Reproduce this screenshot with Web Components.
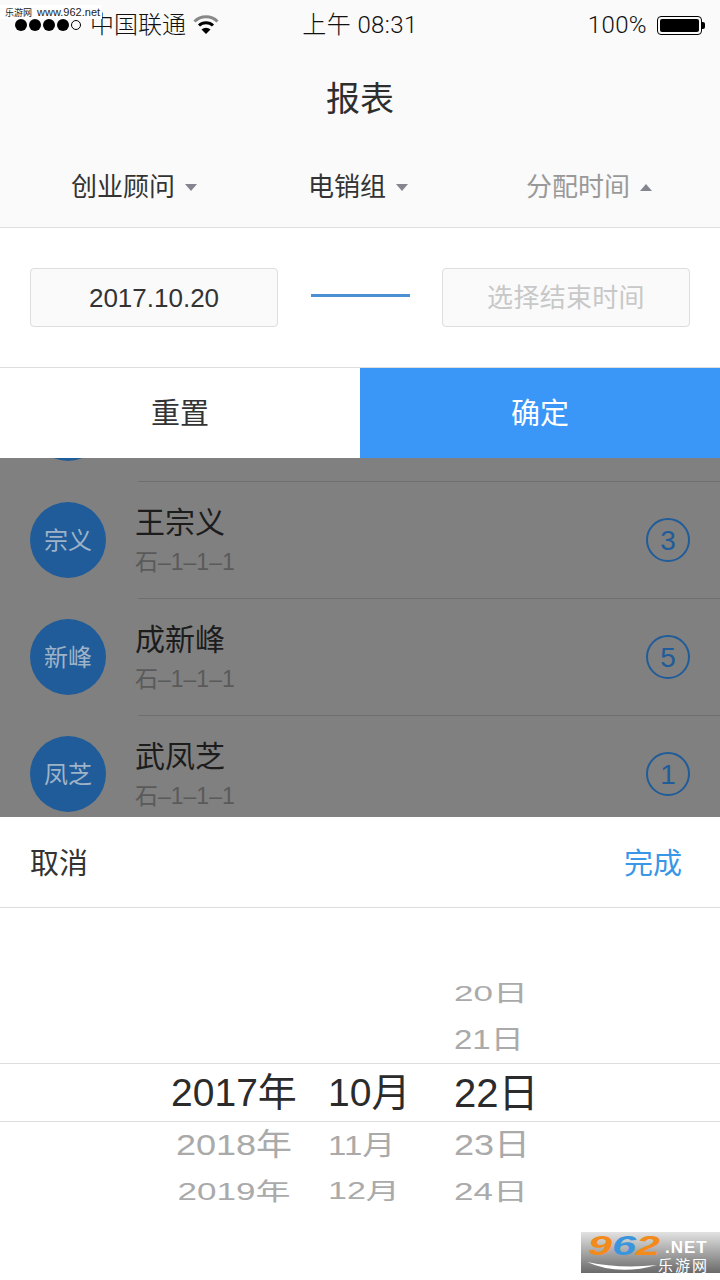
<!DOCTYPE html>
<html lang="zh-CN">
<head>
<meta charset="utf-8">
<title>报表</title>
<style>
  html,body{ margin:0; padding:0; background:#fff; }
  body{
    width:720px; height:1280px; overflow:hidden; position:relative;
    font-family:"Liberation Sans","Noto Sans CJK SC",sans-serif;
    color:#333;
  }
  .dim-list{ display:block; height:359px; overflow:hidden; background:#808080; }
</style>
</head>
<body>
<status-bar></status-bar>
<report-header></report-header>
<date-range start="2017.10.20" placeholder="选择结束时间"></date-range>
<action-bar></action-bar>
<div class="dim-list">
  <person-row partial></person-row>
  <person-row initials="宗义" name="王宗义" sub="石–1–1–1" count="3"></person-row>
  <person-row initials="新峰" name="成新峰" sub="石–1–1–1" count="5"></person-row>
  <person-row initials="凤芝" name="武凤芝" sub="石–1–1–1" count="1"></person-row>
</div>
<date-wheel></date-wheel>
<site-marks></site-marks>

<script>
(() => {
  class StatusBar extends HTMLElement {
    constructor() {
      super();
      this.attachShadow({ mode: 'open' }).innerHTML = `
        <style>
          :host{
            display:grid; grid-template-columns:1fr auto 1fr; align-items:center;
            height:50px; padding:0 15px; box-sizing:border-box;
            background:#fafafa; color:#111; font-size:24px; line-height:1;
            font-family:Roboto,"Noto Sans CJK SC",sans-serif; font-weight:300;
          }
          .left,.right{ display:flex; align-items:center; }
          .right{ justify-content:flex-end; }
          .mid,.pct{ letter-spacing:.4px; }
          .dots{ display:flex; gap:2px; margin-right:9px; align-items:center; }
          .dots i{ width:12px; height:12px; border-radius:50%; background:#000; box-sizing:border-box; }
          .dots i.off{ width:10px; height:10px; background:none; border:1px solid #000; }
          .wifi{ margin-left:7px; }
          .bat{ display:flex; align-items:center; margin-left:10px; }
          .bat b{ display:block; width:45px; height:19px; box-sizing:border-box; border:1px solid #000; border-radius:4px; padding:2px; }
          .bat b::before{ content:''; display:block; height:100%; background:#000; border-radius:2px; }
          .bat u{ display:block; width:3px; height:7px; background:#000; border-radius:0 2px 2px 0; }
        </style>
        <div class="left">
          <div class="dots"><i></i><i></i><i></i><i></i><i class="off"></i></div>
          <span>中国联通</span>
          <svg class="wifi" width="26" height="20" viewBox="0 0 26 20">
            <path d="M1.5 6.5A16.5 16.5 0 0 1 24.5 6.5" fill="none" stroke="#888" stroke-width="3"/>
            <path d="M6 10.5A10 10 0 0 1 20 10.5" fill="none" stroke="#000" stroke-width="3"/>
            <path d="M8.5 14.5A6.5 6.5 0 0 1 17.5 14.5L13 19Z" fill="#000"/>
          </svg>
        </div>
        <div class="mid">上午 08:31</div>
        <div class="right">
          <span class="pct">100%</span>
          <div class="bat"><b></b><u></u></div>
        </div>`;
    }
  }

  class ReportHeader extends HTMLElement {
    constructor() {
      super();
      this.attachShadow({ mode: 'open' }).innerHTML = `
        <style>
          :host{ display:block; background:#fafafa; border-bottom:1px solid #ddd; height:178px; box-sizing:border-box; }
          h1{ margin:0; height:97px; display:flex; align-items:center; justify-content:center; font-size:34px; font-weight:400; color:#2e2e2e; line-height:1; }
          .tabs{ display:flex; padding-left:71px; height:80px; box-sizing:border-box; align-items:center; }
          .tab{ display:flex; align-items:center; gap:10px; font-size:26px; line-height:1; color:#333; white-space:nowrap; }
          .tab + .tab{ margin-left:111px; }
          .tab + .tab + .tab{ margin-left:118px; color:#999; }
          .tri{ width:0; height:0; border:6px solid transparent; border-top:7px solid #85858f; border-bottom:0; }
          .tri.up{ border-top:0; border-bottom:7px solid #85858f; }
        </style>
        <h1>报表</h1>
        <div class="tabs">
          <div class="tab">创业顾问<span class="tri"></span></div>
          <div class="tab">电销组<span class="tri"></span></div>
          <div class="tab">分配时间<span class="tri up"></span></div>
        </div>`;
    }
  }

  class DateRange extends HTMLElement {
    constructor() {
      super();
      this.attachShadow({ mode: 'open' });
    }
    connectedCallback() {
      this.shadowRoot.innerHTML = `
        <style>
          :host{ display:flex; align-items:center; justify-content:space-between; height:139px; padding:0 30px; box-sizing:border-box; background:#fff; }
          .box{ width:248px; height:59px; box-sizing:border-box; border:1px solid #ddd; border-radius:4px; background:#fafafa; display:flex; align-items:center; justify-content:center; font-size:26px; line-height:1; color:#333; }
          .box.ph{ color:#c8c8c8; letter-spacing:.3px; padding-top:1px; }
          .dash{ width:99px; height:3px; background:#4a90d2; margin-top:-4px; }
        </style>
        <div class="box">${this.getAttribute('start')}</div>
        <div class="dash"></div>
        <div class="box ph">${this.getAttribute('placeholder')}</div>`;
    }
  }

  class ActionBar extends HTMLElement {
    constructor() {
      super();
      this.attachShadow({ mode: 'open' }).innerHTML = `
        <style>
          :host{ display:grid; grid-template-columns:1fr 1fr; height:91px; box-sizing:border-box; border-top:1px solid #ddd; font-size:29px; line-height:1; }
          div{ display:flex; align-items:center; justify-content:center; padding-top:2px; }
          .reset{ background:#fff; color:#333; }
          .ok{ background:#3a96f7; color:#fff; }
        </style>
        <div class="reset">重置</div>
        <div class="ok">确定</div>`;
    }
  }

  class PersonRow extends HTMLElement {
    constructor() {
      super();
      this.attachShadow({ mode: 'open' });
    }
    connectedCallback() {
      const a = n => this.getAttribute(n) || '';
      const partial = this.hasAttribute('partial');
      this.shadowRoot.innerHTML = `
        <style>
          :host{ display:flex; align-items:center; height:117px; padding:0 30px; box-sizing:border-box; position:relative; color:#1a1a1a; }
          :host([partial]){ margin-top:-94px; }
          :host(:not([partial]))::before{ content:''; position:absolute; left:138px; right:0; top:0; height:1px; background:#6f6f6f; }
          .av{ flex:none; width:76px; height:76px; box-sizing:border-box; padding-top:2px; border-radius:50%; background:#1f5c99; color:#9fb3c8; display:flex; align-items:center; justify-content:center; font-size:24px; line-height:1; }
          .txt{ flex:1; margin-left:29px; padding-top:2px; }
          .name{ font-size:30px; line-height:34px; color:#1c1c1c; }
          .sub{ font-size:23px; line-height:28px; margin-top:8px; color:#5a5a5a; }
          .num{ flex:none; width:44px; height:44px; box-sizing:border-box; padding-top:2px; border:2px solid #1f5c99; border-radius:50%; display:flex; align-items:center; justify-content:center; font-size:28px; line-height:1; color:#1f5c99; }
        </style>
        <div class="av">${a('initials')}</div>
        ${partial ? '' : `
        <div class="txt"><div class="name">${a('name')}</div><div class="sub">${a('sub')}</div></div>
        <div class="num">${a('count')}</div>`}`;
    }
  }

  class DateWheel extends HTMLElement {
    constructor() {
      super();
      // [text, font size, vertical squash] per cell; the wheel flattens rows away from the middle
      const rows = [
        { h:46, c:['', '', ['20日',35,.64]] },
        { h:47, c:['', '', ['21日',33,.82]] },
        { h:59, on:true, c:[['2017年',39,1], ['10月',39,1], ['22日',40,1]] },
        { h:46, c:[['2018年',36,.84], ['11月',33,.84], ['23日',36,.84]] },
        { h:46, c:[['2019年',35,.68], ['12月',34,.68], ['24日',35,.68]] },
      ];
      const cell = c => c ? `<span style="font-size:${c[1]}px;transform:scaleY(${c[2]})">${c[0]}</span>` : '<span></span>';
      this.attachShadow({ mode: 'open' }).innerHTML = `
        <style>
          :host{ display:block; background:#fff; height:463px; box-sizing:border-box; }
          .head{ height:91px; box-sizing:border-box; border-bottom:1px solid #ddd; display:flex; align-items:center; justify-content:space-between; padding:5px 38px 0 30px; font-size:29px; line-height:1; color:#333; }
          .head .done{ color:#3a96e6; }
          .wheel{ padding-top:62px; }
          .row{ display:grid; grid-template-columns:180px 122px auto; column-gap:4px; padding-left:144px; align-items:center; color:#aaa; line-height:1; box-sizing:border-box; }
          .row.on{ border-top:1px solid #ddd; border-bottom:1px solid #ddd; color:#2b2b2b; }
          span{ display:block; white-space:nowrap; }
          span:first-child{ text-align:center; }
        </style>
        <div class="head"><div>取消</div><div class="done">完成</div></div>
        <div class="wheel">
          ${rows.map(r => `<div class="row${r.on ? ' on' : ''}" style="height:${r.h}px">${r.c.map(cell).join('')}</div>`).join('')}
        </div>`;
    }
  }

  // site watermarks stamped over the screenshot
  class SiteMarks extends HTMLElement {
    constructor() {
      super();
      this.attachShadow({ mode: 'open' }).innerHTML = `
        <style>
          :host{ display:block; }
          .top{ position:absolute; left:0; top:5px; width:102px; height:14px; background:#fff; color:#222; font-size:11px; line-height:14px; padding-left:5px; box-sizing:border-box; white-space:nowrap; }
          .top small{ font-size:9px; margin-right:2px; }
          .logo{ position:absolute; left:581px; top:1232px; width:139px; height:41px; background:linear-gradient(#e2e2e2,#6a6a6a); }
          .n{ position:absolute; left:7px; top:1px; font:italic 700 27px/27px "Liberation Sans",sans-serif; color:#f28a1c; transform:scaleX(1.6); transform-origin:left center; }
          .n em{ color:#3b95dc; font-style:inherit; }
          .net{ position:absolute; left:84px; top:7px; font:700 17px/17px "Liberation Sans",sans-serif; letter-spacing:1px; color:#fff; }
          .cn{ position:absolute; left:77px; top:26px; font-size:15px; line-height:15px; letter-spacing:2px; color:#fff; }
          svg{ position:absolute; left:5px; top:29px; }
        </style>
        <div class="top"><small>乐游网</small> www.962.net</div>
        <div class="logo">
          <div class="n">9<em>6</em>2</div>
          <svg width="72" height="12" viewBox="0 0 72 12"><path d="M1 1Q32 15 71 4Q34 8 1 1Z" fill="#fff"/></svg>
          <div class="net">.NET</div>
          <div class="cn">乐游网</div>
        </div>`;
    }
  }

  customElements.define('status-bar', StatusBar);
  customElements.define('report-header', ReportHeader);
  customElements.define('date-range', DateRange);
  customElements.define('action-bar', ActionBar);
  customElements.define('person-row', PersonRow);
  customElements.define('date-wheel', DateWheel);
  customElements.define('site-marks', SiteMarks);
})();
</script>
</body>
</html>
